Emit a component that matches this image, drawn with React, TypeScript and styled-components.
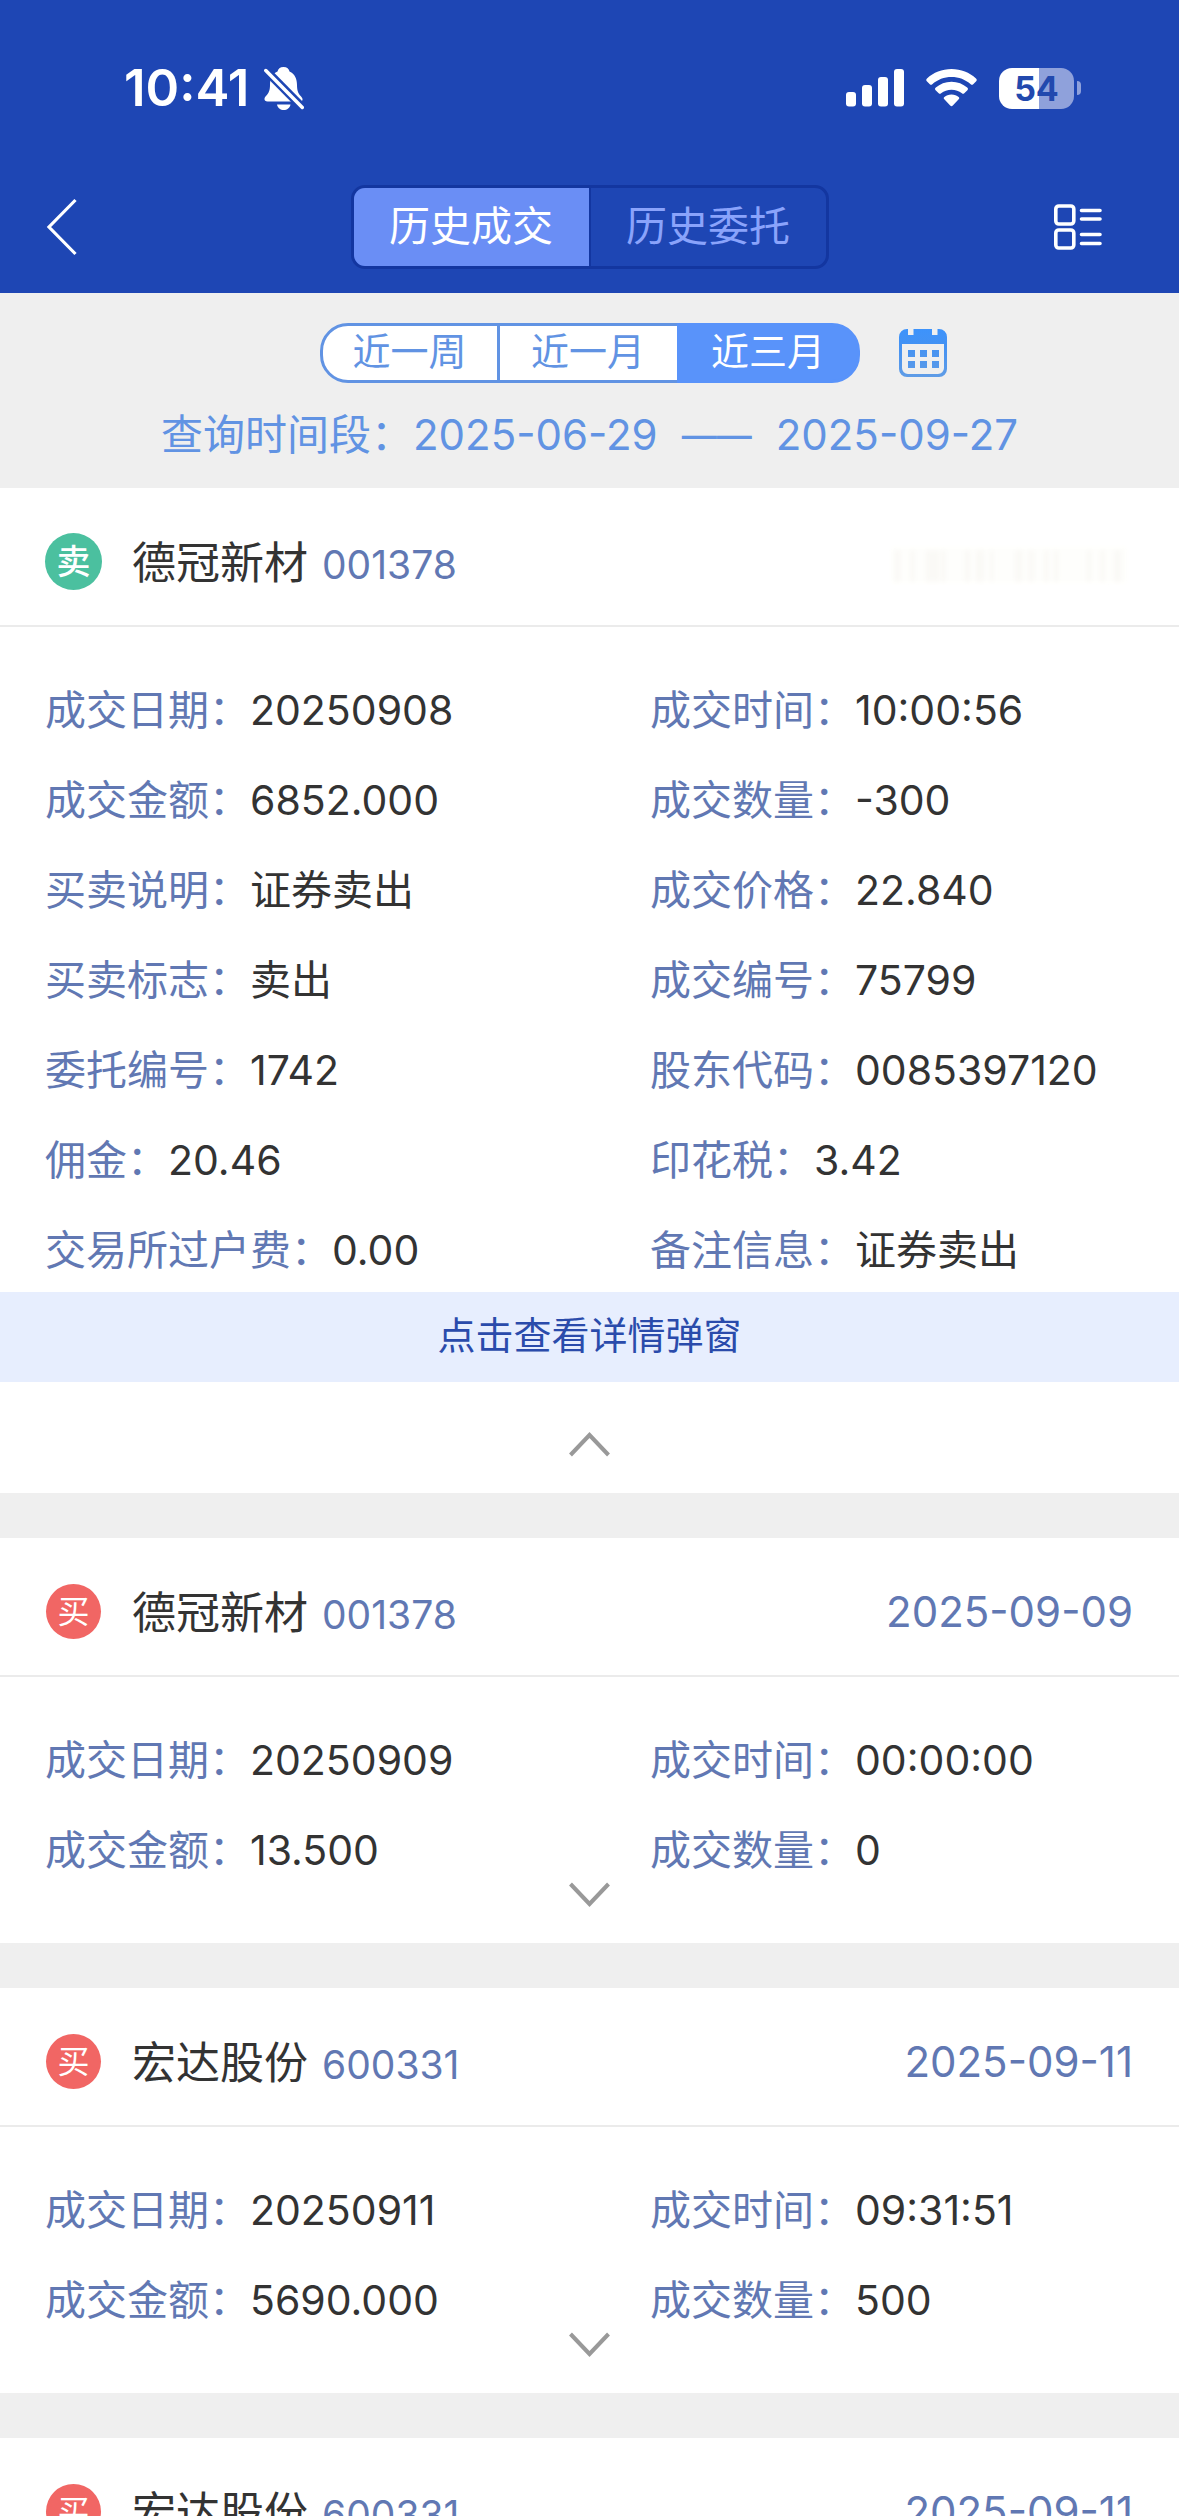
import React, { useState } from 'react';
import styled, { createGlobalStyle } from 'styled-components';

const colors = {
  header: '#1e46b4',
  headerLine: '#1336a0',
  tabActive: '#6a8ef5',
  tabIdle: '#8aa3fb',
  band: '#efefef',
  range: '#6193e3',
  rangeActive: '#5993fa',
  label: '#6178b3',
  text: '#333333',
  line: '#ebebeb',
  detailBg: '#e7eefe',
  detailText: '#2a4bab',
  arrow: '#999999',
  sell: '#4bc09f',
  buy: '#f16664',
};

const GlobalStyle = createGlobalStyle`
  *, *::before, *::after { box-sizing: border-box; }
  body {
    margin: 0;
    background: ${colors.band};
    font-family: Inter, "Noto Sans CJK SC", sans-serif;
    color: ${colors.text};
  }
  button {
    font: inherit;
    color: inherit;
    border: 0;
    padding: 0;
    margin: 0;
    background: none;
    cursor: pointer;
  }
  svg { display: block; }
`;

const Page = styled.div`
  display: flex;
  flex-direction: column;
  height: 100vh;
  overflow: hidden;
`;

const Top = styled.header`
  flex: none;
  background: ${colors.header};
  color: #fff;
`;

const StatusBar = styled.div`
  display: flex;
  justify-content: space-between;
  align-items: center;
  padding: 58px 98px 42px 124px;
`;

const StatusGroup = styled.div<{ $gap: number }>`
  display: flex;
  align-items: center;
  gap: ${(p) => p.$gap}px;
  height: 60px;
`;

const Clock = styled.span`
  font-size: 51px;
  line-height: 60px;
  font-weight: 600;
`;

const Battery = styled.div`
  display: flex;
  align-items: center;
  gap: 3px;
`;

const BatteryBody = styled.div<{ $level: number }>`
  width: 75px;
  height: 41px;
  border-radius: 13px;
  background: linear-gradient(
    to right,
    #fff ${(p) => p.$level}%,
    #8fa1db ${(p) => p.$level}%
  );
  color: #2249ae;
  font-size: 34px;
  line-height: 41px;
  font-weight: 700;
  text-align: center;
`;

const BatteryTip = styled.div`
  width: 4px;
  height: 14px;
  border-radius: 0 6px 6px 0;
  background: #8fa1db;
`;

const NavBar = styled.nav`
  display: grid;
  grid-template-columns: 1fr auto 1fr;
  align-items: center;
  height: 133px;
  padding: 0 77px 0 45px;
`;

const IconButton = styled.button<{ $end?: boolean }>`
  justify-self: ${(p) => (p.$end ? 'end' : 'start')};
`;

const Tabs = styled.div`
  display: flex;
  margin-left: 32px;
  height: 84px;
  border: 3px solid ${colors.headerLine};
  border-radius: 14px;
  overflow: hidden;
`;

const Tab = styled.button<{ $active: boolean }>`
  width: 235px;
  padding-bottom: 2px;
  font-size: 41px;
  line-height: 60px;
  background: ${(p) => (p.$active ? colors.tabActive : 'transparent')};
  color: ${(p) => (p.$active ? '#fff' : colors.tabIdle)};
  & + & {
    width: 237px;
    border-left: 2px solid ${colors.headerLine};
  }
`;

const Filter = styled.section`
  flex: none;
  display: flex;
  flex-direction: column;
  gap: 22px;
  padding: 30px 0 23px;
  color: ${colors.range};
`;

const RangeRow = styled.div`
  display: grid;
  grid-template-columns: 1fr auto 1fr;
  align-items: center;
  column-gap: 39px;
  &::before { content: ''; }
`;

const Ranges = styled.div`
  display: flex;
  height: 60px;
`;

const Range = styled.button<{ $active: boolean }>`
  width: 183px;
  padding-bottom: 4px;
  font-size: 38px;
  line-height: 50px;
  border: 3px solid ${(p) => (p.$active ? colors.rangeActive : colors.range)};
  background: ${(p) => (p.$active ? colors.rangeActive : '#fff')};
  color: ${(p) => (p.$active ? '#fff' : colors.range)};
  &:first-child {
    width: 180px;
    border-radius: 28px 0 0 28px;
  }
  &:last-child { border-radius: 0 28px 28px 0; }
  & + & { margin-left: -3px; }
`;

const Query = styled.div`
  display: flex;
  justify-content: center;
  font-size: 42px;
  line-height: 60px;
`;

const Period = styled.div`
  display: flex;
  gap: 24px;
`;

const Dash = styled.span`
  font-size: 35px;
  font-weight: 500;
`;

const List = styled.main`
  flex: 1;
  min-height: 0;
  display: flex;
  flex-direction: column;
  gap: 45px;
  overflow: hidden;
`;

const Card = styled.article`
  flex: none;
  background: #fff;
`;

const CardHead = styled.div`
  display: flex;
  align-items: center;
  height: 139px;
  padding: 10px 46px 0 45px;
  border-bottom: 2px solid ${colors.line};
`;

const BadgeSlot = styled.div`
  display: flex;
  justify-content: center;
  width: 57px;
  margin-right: 30px;
`;

const Badge = styled.span<{ $sell: boolean }>`
  display: flex;
  align-items: center;
  justify-content: center;
  width: ${(p) => (p.$sell ? 57 : 55)}px;
  height: ${(p) => (p.$sell ? 57 : 55)}px;
  border-radius: 50%;
  background: ${(p) => (p.$sell ? colors.sell : colors.buy)};
  color: #fff;
  font-size: ${(p) => (p.$sell ? 34 : 32)}px;
  line-height: 40px;
  font-weight: ${(p) => (p.$sell ? 500 : 400)};
`;

const Stock = styled.h2`
  display: flex;
  align-items: baseline;
  gap: 14px;
  margin: 0;
  padding-top: 4px;
  font-size: 44px;
  line-height: 60px;
  font-weight: 400;
`;

const Code = styled.span`
  font-size: 39px;
  color: ${colors.label};
`;

const TradeDay = styled.time`
  margin-left: auto;
  font-size: 42px;
  line-height: 60px;
  color: ${colors.label};
`;

const Masked = styled.div`
  margin-left: auto;
  padding-top: 6px;
`;

const Fields = styled.dl`
  display: grid;
  grid-template-columns: 5fr 4fr;
  row-gap: 30px;
  margin: 0;
  padding: 53px 45px 0;
`;

const Field = styled.div`
  display: flex;
  font-size: 41px;
  line-height: 60px;
  white-space: nowrap;
`;

const Label = styled.dt`
  color: ${colors.label};
`;

const Value = styled.dd`
  margin: 0;
`;

const Detail = styled.button`
  display: block;
  width: 100%;
  height: 90px;
  margin-top: 12px;
  padding-bottom: 4px;
  background: ${colors.detailBg};
  color: ${colors.detailText};
  font-size: 38px;
  line-height: 60px;
`;

const Toggle = styled.button<{ $open: boolean }>`
  display: flex;
  justify-content: center;
  align-items: flex-start;
  width: 100%;
  height: ${(p) => (p.$open ? 111 : 63)}px;
  padding-top: ${(p) => (p.$open ? 50 : 2)}px;
`;

const BellOff = () => (
  <svg width="40" height="43" viewBox="0 0 40 43" aria-hidden="true">
    <path
      d="M19.5 0C23 0 25 2 25.500 4.500C31 7 33 12 33 18C33 24 34.500 27 37.500 30C39.500 32.500 38.500 34.500 36 34.500H3.500C.5 34.500 -.5 32 1.500 29.500C5 26 6 23 6 18C6 12 8 7 13.500 4.500C14 2 16 0 19.500 0Z"
      fill="#fff"
    />
    <path d="M13 37.500H26.500C26 41 23 43 19.700 43C16.500 43 13.500 41 13 37.500Z" fill="#fff" />
    <path d="M-2 -.5L42 44" stroke={colors.header} strokeWidth="8.500" />
    <path d="M1.800 3.500L38.300 40.500" stroke="#fff" strokeWidth="3.500" strokeLinecap="round" />
  </svg>
);

const Signal = () => (
  <svg width="58" height="38" viewBox="0 0 58 38" fill="#fff" aria-hidden="true">
    <rect x="0" y="23" width="10" height="14.500" rx="3" />
    <rect x="16" y="16" width="10" height="21.500" rx="3" />
    <rect x="32" y="8" width="10" height="29.500" rx="3" />
    <rect x="48" y="0" width="10" height="37.500" rx="3" />
  </svg>
);

const Wifi = () => (
  <svg width="51" height="38" viewBox="0 0 51 38" fill="#fff" aria-hidden="true">
    <path d="M25.500 0C35 0 43.500 3.500 50 9.500C51 10.500 51 11.300 50.200 12.200L47.200 15.200C46.400 16 45.600 16 44.700 15.200C39.500 10.600 32.800 8 25.500 8C18.200 8 11.500 10.600 6.300 15.200C5.400 16 4.600 16 3.800 15.200L.8 12.200C0 11.300 0 10.500 1 9.500C7.500 3.500 16 0 25.500 0Z" />
    <path d="M25.500 12.800C31.700 12.800 37 15 41.200 18.600C42.200 19.500 42.200 20.300 41.400 21.200L38.300 24.300C37.500 25 36.700 25 35.900 24.300C33 22 29.500 20.700 25.500 20.700C21.500 20.700 18 22 15.100 24.300C14.300 25 13.500 25 12.700 24.300L9.600 21.200C8.800 20.300 8.800 19.500 9.800 18.600C14 15 19.300 12.800 25.500 12.800Z" />
    <path d="M25.500 25.500C28.500 25.500 30.800 26.500 32.600 28C33.500 28.800 33.400 29.600 32.700 30.300L26.800 36.500C25.900 37.400 25.100 37.400 24.200 36.500L18.300 30.300C17.600 29.600 17.500 28.800 18.400 28C20.200 26.500 22.500 25.500 25.500 25.500Z" />
  </svg>
);

const Back = () => (
  <svg width="34" height="58" viewBox="0 0 34 58" fill="none" aria-hidden="true">
    <path d="M30.500 2L4 29L30.500 56" stroke="#fff" strokeWidth="3.200" />
  </svg>
);

const Layout = () => (
  <svg width="48" height="46" viewBox="0 0 48 46" fill="none" stroke="#fff" aria-hidden="true">
    <rect x="1.800" y="2" width="18" height="18" rx="3" strokeWidth="3.600" />
    <rect x="1.800" y="26" width="18" height="18" rx="3" strokeWidth="3.600" />
    <path d="M27.500 6.500H46M27.500 15H46M27.500 30.500H46M27.500 39.500H46" strokeWidth="3.600" strokeLinecap="round" />
  </svg>
);

const Calendar = () => (
  <svg width="48" height="48" viewBox="0 0 48 48" aria-hidden="true">
    <defs>
      <linearGradient id="calendarFill" x1="0" y1="0" x2="0" y2="1">
        <stop offset="0" stopColor="#3d93fb" />
        <stop offset="0.350" stopColor="#4492f3" />
        <stop offset="1" stopColor="#5f9ce6" />
      </linearGradient>
    </defs>
    <path
      fill="url(#calendarFill)"
      fillRule="evenodd"
      d="M8 0H9V6H14.500V0H33V6H38.500V0H40A8 8 0 0 1 48 8V40A8 8 0 0 1 40 48H8A8 8 0 0 1 0 40V8A8 8 0 0 1 8 0ZM3 15V39A6 6 0 0 0 9 45H39A6 6 0 0 0 45 39V15ZM9 21H16V28H9ZM21 21H28V28H21ZM33 21H40V28H33ZM9 32H16V39H9ZM21 32H28V39H21ZM33 32H40V39H33Z"
    />
  </svg>
);

const Arrow = ({ up }: { up: boolean }) => (
  <svg width="41" height="25" viewBox="0 0 41 25" fill="none" aria-hidden="true">
    <path
      d={up ? 'M1.500 23L20.500 3L39.500 23' : 'M1.500 2L20.500 22L39.500 2'}
      stroke={colors.arrow}
      strokeWidth="4"
    />
  </svg>
);

const smudges = [
  [10, 6], [26, 5], [42, 14], [58, 5], [82, 6], [94, 8], [108, 4],
  [134, 8], [148, 6], [164, 5], [174, 5], [208, 5], [222, 5], [236, 8],
];

const MaskedDate = () => (
  <Masked aria-hidden="true">
    <svg width="248" height="50" viewBox="0 0 256 50">
      <defs>
        <filter id="soften">
          <feGaussianBlur stdDeviation="2 3" />
        </filter>
      </defs>
      <rect x="6" y="6" width="244" height="38" fill="#fefefc" filter="url(#soften)" />
      <g fill="#faf9f6" filter="url(#soften)">
        {smudges.map(([x, w]) => (
          <rect key={x} x={x} y="10" width={w} height="32" />
        ))}
      </g>
    </svg>
  </Masked>
);

type Trade = {
  id: string;
  sell: boolean;
  name: string;
  code: string;
  day: string | null;
  fields: [string, string][];
};

const trades: Trade[] = [
  {
    id: '75799',
    sell: true,
    name: '德冠新材',
    code: '001378',
    day: null,
    fields: [
      ['成交日期', '20250908'],
      ['成交时间', '10:00:56'],
      ['成交金额', '6852.000'],
      ['成交数量', '-300'],
      ['买卖说明', '证券卖出'],
      ['成交价格', '22.840'],
      ['买卖标志', '卖出'],
      ['成交编号', '75799'],
      ['委托编号', '1742'],
      ['股东代码', '0085397120'],
      ['佣金', '20.46'],
      ['印花税', '3.42'],
      ['交易所过户费', '0.00'],
      ['备注信息', '证券卖出'],
    ],
  },
  {
    id: 'a',
    sell: false,
    name: '德冠新材',
    code: '001378',
    day: '2025-09-09',
    fields: [
      ['成交日期', '20250909'],
      ['成交时间', '00:00:00'],
      ['成交金额', '13.500'],
      ['成交数量', '0'],
    ],
  },
  {
    id: 'b',
    sell: false,
    name: '宏达股份',
    code: '600331',
    day: '2025-09-11',
    fields: [
      ['成交日期', '20250911'],
      ['成交时间', '09:31:51'],
      ['成交金额', '5690.000'],
      ['成交数量', '500'],
    ],
  },
  {
    id: 'c',
    sell: false,
    name: '宏达股份',
    code: '600331',
    day: '2025-09-11',
    fields: [],
  },
];

const TradeCard = ({ trade, startOpen }: { trade: Trade; startOpen: boolean }) => {
  const [open, setOpen] = useState(startOpen);
  const shown = open ? trade.fields : trade.fields.slice(0, 4);
  return (
    <Card>
      <CardHead>
        <BadgeSlot>
          <Badge $sell={trade.sell}>{trade.sell ? '卖' : '买'}</Badge>
        </BadgeSlot>
        <Stock>
          {trade.name}
          <Code>{trade.code}</Code>
        </Stock>
        {trade.day ? <TradeDay dateTime={trade.day}>{trade.day}</TradeDay> : <MaskedDate />}
      </CardHead>
      {shown.length > 0 && (
        <>
          <Fields>
            {shown.map(([label, value]) => (
              <Field key={label}>
                <Label>{label}：</Label>
                <Value>{value}</Value>
              </Field>
            ))}
          </Fields>
          {open && <Detail type="button">点击查看详情弹窗</Detail>}
          <Toggle
            type="button"
            $open={open}
            aria-expanded={open}
            aria-label={open ? '收起' : '展开'}
            onClick={() => setOpen(!open)}
          >
            <Arrow up={open} />
          </Toggle>
        </>
      )}
    </Card>
  );
};

const tabNames = ['历史成交', '历史委托'];
const rangeNames = ['近一周', '近一月', '近三月'];

export default function App() {
  const [tab, setTab] = useState(0);
  const [range, setRange] = useState(2);
  return (
    <>
      <GlobalStyle />
      <Page>
        <Top>
          <StatusBar>
            <StatusGroup $gap={15}>
              <Clock>10:41</Clock>
              <BellOff />
            </StatusGroup>
            <StatusGroup $gap={22}>
              <Signal />
              <Wifi />
              <Battery>
                <BatteryBody $level={54}>54</BatteryBody>
                <BatteryTip />
              </Battery>
            </StatusGroup>
          </StatusBar>
          <NavBar>
            <IconButton type="button" aria-label="返回">
              <Back />
            </IconButton>
            <Tabs>
              {tabNames.map((name, i) => (
                <Tab key={name} type="button" $active={i === tab} onClick={() => setTab(i)}>
                  {name}
                </Tab>
              ))}
            </Tabs>
            <IconButton type="button" aria-label="切换布局" $end>
              <Layout />
            </IconButton>
          </NavBar>
        </Top>
        <Filter>
          <RangeRow>
            <Ranges>
              {rangeNames.map((name, i) => (
                <Range key={name} type="button" $active={i === range} onClick={() => setRange(i)}>
                  {name}
                </Range>
              ))}
            </Ranges>
            <IconButton type="button" aria-label="选择日期">
              <Calendar />
            </IconButton>
          </RangeRow>
          <Query>
            查询时间段：
            <Period>
              <time dateTime="2025-06-29">2025-06-29</time>
              <Dash>——</Dash>
              <time dateTime="2025-09-27">2025-09-27</time>
            </Period>
          </Query>
        </Filter>
        <List>
          {trades.map((trade, i) => (
            <TradeCard key={trade.id} trade={trade} startOpen={i === 0} />
          ))}
        </List>
      </Page>
    </>
  );
}
